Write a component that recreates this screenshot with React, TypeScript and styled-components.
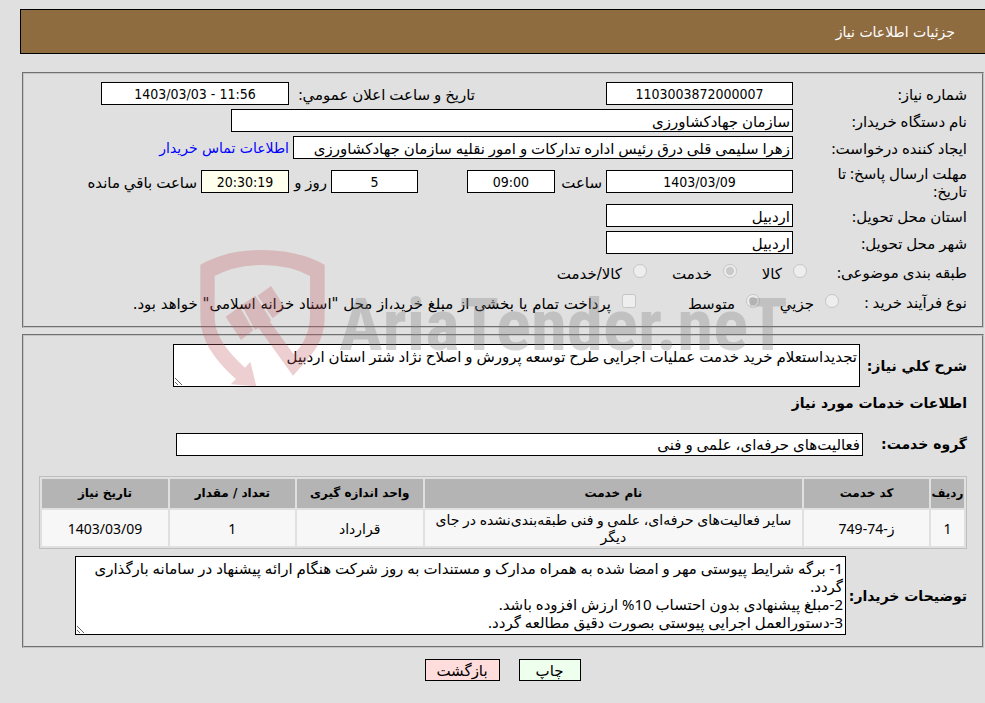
import React from "react";
import styled, { createGlobalStyle } from "styled-components";

const sans = `"Noto Sans", "DejaVu Sans", Tahoma, sans-serif`;
const strong = `"DejaVu Sans", Tahoma, sans-serif`;
const digits = `"DejaVu Sans Condensed", "DejaVu Sans", Tahoma, sans-serif`;

const GlobalStyle = createGlobalStyle`
  * { box-sizing: border-box; }
  body { margin: 0; background: #e0e0e0; color: #000; font: 15px/18px ${sans}; }
`;

const Page = styled.main`
  position: relative;
  padding: 9px 0 20px;
`;

const TitleBar = styled.header`
  display: flex;
  align-items: center;
  height: 45px;
  margin-left: 20px;
  padding-right: 30px;
  border: 1px solid #000;
  border-right: 0;
  background: #8f6b40;
`;

const Title = styled.h1`
  margin: 0;
  color: #fff;
  font: 14px/20px ${strong};
`;

const Panels = styled.div`
  display: flex;
  flex-direction: column;
  gap: 6px;
  margin: 18px 1px 0 22px;
`;

const Panel = styled.fieldset`
  min-width: 0;
  margin: 0;
  padding: 6px 15px 10px;
  border: 2px groove #c4c4c4;
`;

const Row = styled.div<{ $h?: number }>`
  display: flex;
  align-items: center;
  min-height: ${(p) => p.$h ?? 27}px;
`;

const Label = styled.label`
  flex: none;
  width: 174px;
  padding-left: 30px;
  white-space: pre-line;
`;

const GroupLabel = styled.span<{ $w: number }>`
  flex: none;
  width: ${(p) => p.$w}px;
  white-space: nowrap;
`;

const Caption = styled.label<{ $w: number; $start?: number }>`
  flex: none;
  width: ${(p) => p.$w}px;
  padding-right: ${(p) => p.$start ?? 4}px;
  white-space: nowrap;
`;

const Spacer = styled.div`
  flex: none;
  width: 49px;
`;

const Field = styled.input<{ $w: number; $center?: boolean; $warm?: boolean }>`
  flex: 0 1 ${(p) => p.$w}px;
  min-width: 0;
  height: 23px;
  padding: 1px 2px;
  border: 1px solid #000;
  border-radius: 0;
  background: ${(p) => (p.$warm ? "#ffffee" : "#fff")};
  color: #000;
  font-family: ${(p) => (p.$center ? digits : sans)};
  font-size: ${(p) => (p.$center ? 14 : 15)}px;
  text-align: ${(p) => (p.$center ? "center" : "right")};
`;

const ContactLink = styled.a`
  padding-right: 4px;
  color: #0000ff;
  font: 14px/18px ${strong};
  text-decoration: none;
  white-space: nowrap;
`;

const Option = styled.label<{ $w?: number }>`
  display: flex;
  flex: none;
  align-items: center;
  gap: 11px;
  width: ${(p) => (p.$w ? `${p.$w}px` : "auto")};
  padding-top: 4px;
  font: 15px/18px ${strong};
  white-space: nowrap;
`;

const Choice = styled.input`
  flex: none;
  width: 14px;
  height: 14px;
  margin: 0 0 6px;
`;

const StrongLabel = styled.label<{ $w: number }>`
  flex: none;
  width: ${(p) => p.$w}px;
  font: bold 14px/18px ${strong};
  white-space: nowrap;
`;

const Heading = styled.h2`
  display: flex;
  align-items: center;
  min-height: 28px;
  margin: 0;
  font: bold 14px/18px ${strong};
`;

const Memo = styled.textarea<{ $w: number; $h: number }>`
  flex: 0 1 ${(p) => p.$w}px;
  min-width: 0;
  height: ${(p) => p.$h}px;
  padding: 2px;
  border: 1px solid #000;
  border-radius: 0;
  background: #fff;
  color: #000;
  font: 15px/18px ${sans};
  overflow: hidden;
`;

const ServiceTable = styled.table`
  width: 100%;
  margin: 5px 0 6px;
  border: 1px solid #bebebe;
  border-collapse: separate;
  border-spacing: 2px;
  table-layout: fixed;
  text-align: center;
  font: 14px/17px ${sans};
`;

const Head = styled.th<{ $w?: string }>`
  width: ${(p) => p.$w ?? "auto"};
  height: 29px;
  padding: 0;
  background: #b4b4b4;
  font-family: ${strong};
  font-size: 12px;
  white-space: nowrap;
`;

const Cell = styled.td`
  height: 36px;
  padding: 1px 3px;
  background: #f7f7f7;
`;

const Actions = styled.div`
  display: flex;
  justify-content: center;
  gap: 19px;
  margin: 11px 0 0 20px;
`;

const ActionButton = styled.button<{ $w: number; $bg: string }>`
  width: ${(p) => p.$w}px;
  height: 22px;
  padding: 0;
  border: 1px solid #000;
  border-radius: 0;
  background: ${(p) => p.$bg};
  color: #000;
  font: 15px/18px ${sans};
`;

const Watermark = styled.div`
  position: absolute;
  top: 250px;
  left: 200px;
  display: flex;
  align-items: flex-start;
  gap: 14px;
  direction: ltr;
  pointer-events: none;
`;

const WatermarkText = styled.span`
  padding-top: 35px;
  color: rgba(127, 127, 127, 0.32);
  font: bold 73px/80px "Roboto Condensed", Roboto, sans-serif;
`;

function Shield() {
  return (
    <svg width="125" height="137" viewBox="0 0 375 411" fill="rgb(196,90,98)" opacity="0.29" aria-hidden="true">
      <path d="M1 44Q80 0 187 0T374 44V200C374 285 325 325 279 377L176 234L165 240L125 165L166 137L213 210L210 215L281 313Q330 265 330 195V78Q270 45 187 45T44 78V200C44 262 90 310 135 353L151 335L169 409L92 403L108 387C50 335 1 275 1 200Z" />
      <path d="M77 200L119 170L160 241L123 270ZM173 137L213 108L256 175L218 205Z" />
    </svg>
  );
}

type Column = { title: string; width?: string; value: string };

const columns: Column[] = [
  { title: "ردیف", width: "33px", value: "1" },
  { title: "کد خدمت", width: "13.7%", value: "ز-74-749" },
  { title: "نام خدمت", value: "سایر فعالیت‌های حرفه‌ای، علمی و فنی طبقه‌بندی‌نشده در جای دیگر" },
  { title: "واحد اندازه گیری", width: "13.8%", value: "قرارداد" },
  { title: "تعداد / مقدار", width: "13.7%", value: "1" },
  { title: "تاریخ نیاز", width: "13.8%", value: "1403/03/09" },
];

const notes = `1- برگه شرایط پیوستی مهر و امضا شده به همراه مدارک و مستندات به روز شرکت هنگام ارائه پیشنهاد در سامانه بارگذاری گردد.
2-مبلغ پیشنهادی بدون احتساب 10% ارزش افزوده باشد.
3-دستورالعمل اجرایی پیوستی بصورت دقیق مطالعه گردد.`;

export default function App() {
  return (
    <Page dir="rtl" lang="fa">
      <GlobalStyle />
      <TitleBar>
        <Title>جزئیات اطلاعات نیاز</Title>
      </TitleBar>

      <Panels>
        <Panel>
          <Row>
            <Label htmlFor="number">شماره نیاز:</Label>
            <Field id="number" $w={187} $center readOnly value="1103003872000007" />
            <Caption htmlFor="announced" $w={317} $start={131}>تاریخ و ساعت اعلان عمومي:</Caption>
            <Field id="announced" dir="ltr" $w={188} $center readOnly value="1403/03/03 - 11:56" />
          </Row>
          <Row>
            <Label htmlFor="agency">نام دستگاه خریدار:</Label>
            <Field id="agency" $w={562} readOnly value="سازمان جهادکشاورزی" />
          </Row>
          <Row>
            <Label htmlFor="creator">ایجاد کننده درخواست:</Label>
            <Field id="creator" $w={500} readOnly value="زهرا سلیمی قلی درق رئیس اداره تدارکات و امور نقلیه سازمان جهادکشاورزی" />
            <ContactLink href="#contact">اطلاعات تماس خریدار</ContactLink>
          </Row>
          <Row $h={41}>
            <Label htmlFor="deadline">{"مهلت ارسال پاسخ: تا\nتاریخ:"}</Label>
            <Field id="deadline" $w={187} $center readOnly value="1403/03/09" />
            <Caption htmlFor="hour" $w={51}>ساعت</Caption>
            <Field id="hour" $w={88} $center readOnly value="09:00" />
            <Spacer />
            <Field id="days" $w={87} $center readOnly value="5" />
            <Caption htmlFor="days" $w={42}>روز و</Caption>
            <Field id="left" $w={88} $center $warm readOnly value="20:30:19" />
            <Caption htmlFor="left" $w={125}>ساعت باقي مانده</Caption>
          </Row>
          <Row>
            <Label htmlFor="province">استان محل تحویل:</Label>
            <Field id="province" $w={187} readOnly value="اردبیل" />
          </Row>
          <Row>
            <Label htmlFor="city">شهر محل تحویل:</Label>
            <Field id="city" $w={187} readOnly value="اردبیل" />
          </Row>
          <Row $h={31} role="radiogroup" aria-labelledby="category">
            <GroupLabel id="category" $w={160}>طبقه بندی موضوعی:</GroupLabel>
            <Option $w={70}><Choice type="radio" name="category" disabled />کالا</Option>
            <Option $w={90}><Choice type="radio" name="category" disabled defaultChecked />خدمت</Option>
            <Option><Choice type="radio" name="category" disabled />کالا/خدمت</Option>
          </Row>
          <Row $h={29} role="radiogroup" aria-labelledby="process">
            <GroupLabel id="process" $w={128}>نوع فرآیند خرید :</GroupLabel>
            <Option $w={79}><Choice type="radio" name="process" disabled />جزیي</Option>
            <Option $w={124}><Choice type="radio" name="process" disabled defaultChecked />متوسط</Option>
            <Option><Choice type="checkbox" disabled />پرداخت تمام یا بخشی از مبلغ خرید،از محل "اسناد خزانه اسلامی" خواهد بود.</Option>
          </Row>
        </Panel>

        <Panel>
          <Row $h={47}>
            <StrongLabel htmlFor="summary" $w={107}>شرح کلي نیاز:</StrongLabel>
            <Memo id="summary" $w={687} $h={43} readOnly value="تجدیداستعلام خرید خدمت عملیات اجرایی طرح توسعه پرورش و اصلاح نژاد شتر استان اردبیل" />
          </Row>
          <Heading>اطلاعات خدمات مورد نیاز</Heading>
          <Row $h={54}>
            <StrongLabel htmlFor="group" $w={104}>گروه خدمت:</StrongLabel>
            <Field id="group" $w={687} readOnly value="فعالیت‌های حرفه‌ای، علمی و فنی" />
          </Row>
          <ServiceTable>
            <thead>
              <tr>{columns.map((c) => <Head key={c.title} scope="col" $w={c.width}>{c.title}</Head>)}</tr>
            </thead>
            <tbody>
              <tr>{columns.map((c) => <Cell key={c.title}>{c.value}</Cell>)}</tr>
            </tbody>
          </ServiceTable>
          <Row $h={81}>
            <StrongLabel htmlFor="notes" $w={121}>توضیحات خریدار:</StrongLabel>
            <Memo id="notes" $w={771} $h={79} readOnly value={notes} />
          </Row>
        </Panel>
      </Panels>

      <Actions>
        <ActionButton type="button" $w={62} $bg="#eeffee">چاپ</ActionButton>
        <ActionButton type="button" $w={75} $bg="#ffdddd">بازگشت</ActionButton>
      </Actions>

      <Watermark>
        <Shield />
        <WatermarkText>AriaTender.neT</WatermarkText>
      </Watermark>
    </Page>
  );
}
